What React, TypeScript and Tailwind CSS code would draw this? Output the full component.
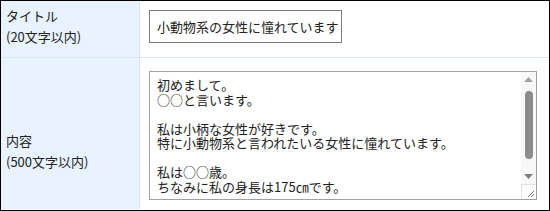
import React from 'react';

const bodyText = [
  '初めまして。',
  '○○と言います。',
  '',
  '私は小柄な女性が好きです。',
  '特に小動物系と言われたいる女性に憧れています。',
  '',
  '私は○○歳。',
  'ちなみに私の身長は175㎝です。',
];

function Scrollbar() {
  return (
    <div className="flex w-[15px] shrink-0 flex-col bg-[#f8f8f8]">
      <div className="flex h-[15px] items-center justify-center">
        <svg width="9" height="5" viewBox="0 0 9 5">
          <path d="M4.5 0 L9 5 L0 5 Z" fill="#a3a3a3" />
        </svg>
      </div>
      <div className="flex flex-1 justify-center pt-[4px]">
        <div className="h-[68px] w-[8px] rounded-full bg-[#8c8c8c]" />
      </div>
      <div className="flex h-[15px] items-center justify-center">
        <svg width="9" height="5" viewBox="0 0 9 5">
          <path d="M0 0 L9 0 L4.5 5 Z" fill="#7e7e7e" />
        </svg>
      </div>
      <div className="flex h-[15px] items-end justify-end border-l border-t border-[#e2e2e2] bg-white p-[1px]">
        <svg width="8" height="8" viewBox="0 0 8 8">
          <path d="M7 1 L1 7 M7 4 L4 7" stroke="#7a7a7a" strokeWidth="1" />
        </svg>
      </div>
    </div>
  );
}

export default function App() {
  return (
    <div
      className="h-[211px] w-[550px] border border-black bg-white text-[13px] text-[#222]"
      style={{ fontFamily: '"Noto Sans CJK JP", "Noto Sans", sans-serif' }}
    >
      <div className="flex h-[57px] border-b border-[#d6e6fb]">
        <div className="w-[139px] shrink-0 border-r border-[#d6e6fb] bg-[#e8f3ff] pl-[5px] pt-[4px] leading-[21px]">
          <div>タイトル</div>
          <div>(20文字以内)</div>
        </div>
        <div className="flex-1 pl-[9px] pt-[9px]">
          <div className="flex h-[33px] w-[193px] items-center border border-[#7a7a7a] px-[7px] whitespace-nowrap">
            小動物系の女性に憧れています
          </div>
        </div>
      </div>
      <div className="flex h-[151px]">
        <div className="w-[139px] shrink-0 border-r border-[#d6e6fb] bg-[#e8f3ff] pl-[5px] pt-[72px] leading-[21px]">
          <div>内容</div>
          <div>(500文字以内)</div>
        </div>
        <div className="flex-1 pl-[9px] pt-[13px]">
          <div className="flex h-[129px] w-[388px] border border-[#a0a0a0]">
            <div className="flex-1 overflow-hidden whitespace-pre pl-[7px] pt-[6px] leading-[14.5px]">
              {bodyText.map((line, i) => (
                <div key={i} className="h-[14.5px]">{line}</div>
              ))}
            </div>
            <Scrollbar />
          </div>
        </div>
      </div>
    </div>
  );
}
